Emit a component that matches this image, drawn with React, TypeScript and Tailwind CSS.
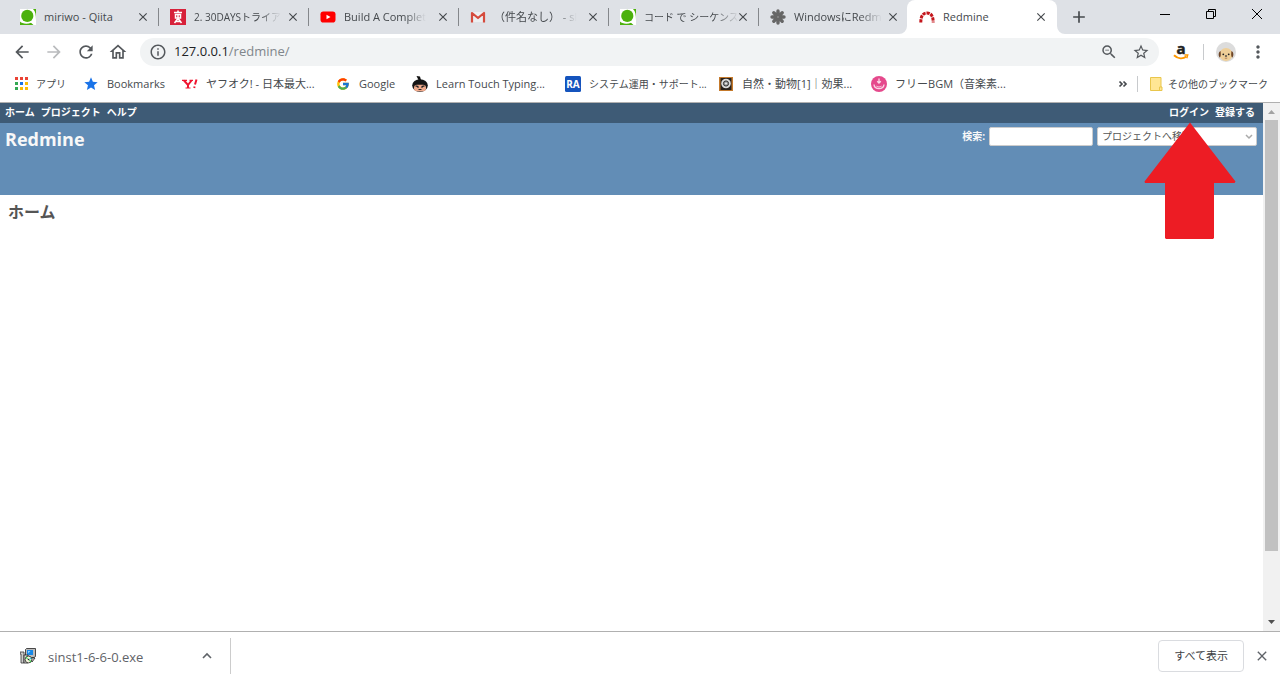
import type { ReactNode } from 'react';
import { FcGoogle } from 'react-icons/fc';
import {
  MdAdd,
  MdArrowBack,
  MdArrowForward,
  MdClose,
  MdInfoOutline,
  MdMoreVert,
  MdOutlineHome,
  MdRefresh,
  MdStar,
  MdStarBorder,
  MdZoomOut,
} from 'react-icons/md';

function QiitaIcon() {
  return (
    <svg className="w-4 h-4 shrink-0" viewBox="0 0 16 16">
      <rect width="16" height="16" fill="#fff" />
      <path d="M13 0h3v11C16 6 15.500 2.500 13 0z" fill="#4cb10d" />
      <circle cx="7.300" cy="6.900" r="6.100" fill="#4cb10d" />
      <path d="M0 12.500c2 2.200 7 3 11 1.200l2.500 2.300H0z" fill="#4cb10d" />
      <path d="M11.500 12.500l4.500 3" stroke="#fff" strokeWidth="1.500" />
    </svg>
  );
}

function TrialIcon() {
  return (
    <svg className="w-4 h-4 shrink-0" viewBox="0 0 16 16">
      <rect width="16" height="16" fill="#d7213a" />
      <path d="M4 3.500h8M8 1.500v2" stroke="#fff" strokeWidth="1.600" />
      <path d="M5.500 5.500h5v3.500h-5z" fill="none" stroke="#fff" strokeWidth="1.500" />
      <path d="M8 5v6M7.500 10L4.500 14M8.500 10l3 4M5.500 12.500h5" fill="none" stroke="#fff" strokeWidth="1.500" />
    </svg>
  );
}

function YoutubeIcon() {
  return (
    <svg className="w-4 h-4 shrink-0" viewBox="0 0 16 16">
      <rect x="0.500" y="2.500" width="15" height="11" rx="2.800" fill="#f00" />
      <path d="M6.500 5.700v4.600l4-2.300z" fill="#fff" />
    </svg>
  );
}

function GmailIcon() {
  return (
    <svg className="w-4 h-4 shrink-0" viewBox="0 0 16 16">
      <path d="M1 3h14v10H1z" fill="#eceff1" />
      <path d="M2 13.500V4l6 5 6-5v9.500" fill="none" stroke="#d54b3d" strokeWidth="2.200" strokeLinejoin="round" />
    </svg>
  );
}

function FlowerIcon() {
  return (
    <svg className="w-4 h-4 shrink-0" viewBox="0 0 16 16" stroke="#666" strokeWidth="3.400" strokeLinecap="round">
      <path d="M8 2v12M2 8h12M3.800 3.800l8.400 8.400M12.200 3.800l-8.400 8.400" />
      <circle cx="8" cy="8" r="1" fill="#888" stroke="none" />
    </svg>
  );
}

function RedmineIcon() {
  return (
    <svg className="w-4 h-4 shrink-0" viewBox="0 0 16 16">
      <path d="M1.800 13.500C1.800 7 4 4 8 4s6.200 3 6.200 9.500" fill="none" stroke="#c4161c" strokeWidth="3" strokeDasharray="3.200 0.900" />
    </svg>
  );
}

function AppsIcon() {
  const colors = ['#ea4335', '#ea4335', '#ea4335', '#34a853', '#1a73e8', '#fbbc05', '#34a853', '#fbbc05', '#fbbc05'];
  return (
    <svg className="w-4 h-4 shrink-0" viewBox="0 0 16 16">
      {colors.map((color, i) => (
        <rect key={i} x={3 + (i % 3) * 5} y={1 + Math.floor(i / 3) * 5} width="3" height="3" fill={color} />
      ))}
    </svg>
  );
}

function YahooIcon() {
  return (
    <svg className="w-4 h-4 shrink-0" viewBox="0 0 16 16" fill="none" stroke="#f0142f">
      <path d="M2 4.500l4 4.500 3.500-4.500M6 8.500V12" strokeWidth="2" />
      <path d="M0 4.300h5M7.500 4.300H11M3.500 12h5" strokeWidth="1.200" />
      <path d="M14.500 3.500l-1.500 5M12.600 10.500l-.4 1.500" strokeWidth="2" />
    </svg>
  );
}

function NinjaIcon() {
  return (
    <svg className="w-4 h-4 shrink-0" viewBox="0 0 16 16">
      <path d="M4.500 0l3.500.5L9 4H6.500z" fill="#111" />
      <ellipse cx="8" cy="9.500" rx="7.800" ry="6.300" fill="#151515" />
      <rect x="2" y="8.800" width="12" height="6.400" rx="3" fill="#efa98b" />
      <path d="M3.500 9.800l3 .8M12.500 9.800l-3 .8" stroke="#222" strokeWidth="1.300" />
      <path d="M5.500 11.500h1M9.500 11.500h1M6.500 13.500h3" stroke="#222" />
    </svg>
  );
}

function RaIcon() {
  return (
    <svg className="w-4 h-4 shrink-0" viewBox="0 0 16 16">
      <rect width="16" height="16" rx="1.500" fill="#1554bd" />
      <text x="8" y="11.500" textAnchor="middle" fill="#fff" className="text-[10px] font-bold">RA</text>
    </svg>
  );
}

function SoundIcon() {
  return (
    <svg className="w-4 h-4 shrink-0" viewBox="0 0 16 16">
      <rect x="1" y="1" width="14" height="14" fill="#c57a2c" />
      <rect x="2.500" y="2" width="11" height="12" fill="#28211b" />
      <circle cx="8" cy="7.500" r="4.800" fill="#ddd" />
      <circle cx="8" cy="7.500" r="2.600" fill="#999" stroke="#333" />
      <circle cx="8" cy="7.500" r="1" fill="#eee" />
    </svg>
  );
}

function BgmIcon() {
  return (
    <svg className="w-4 h-4 shrink-0" viewBox="0 0 16 16">
      <circle cx="8" cy="8" r="8" fill="#e5498c" />
      <path d="M8 2.500v4.500M6.200 5.300L8 7.100l1.800-1.800" fill="none" stroke="#fbdbe8" strokeWidth="1.300" />
      <path d="M3 8.500c.5 5.500 9.500 5.500 10 0" fill="none" stroke="#f9d3e3" strokeWidth="1.400" />
      <path d="M5 9.500c1.500 1.200 4.500 1.200 6 0-.5 2.500-5.500 2.500-6 0z" fill="#f9d3e3" />
    </svg>
  );
}

function FolderIcon() {
  return (
    <svg className="w-4 h-4 shrink-0" viewBox="0 0 16 16">
      <path d="M2.500 1.500h10.500v9.500h1v3.500H2.500z" fill="#ffe694" stroke="#e9c64c" />
      <path d="M11.500 14v-3h2" fill="none" stroke="#e9c64c" />
    </svg>
  );
}

function AmazonIcon() {
  return (
    <svg className="w-4 h-4 overflow-visible" viewBox="0 0 16 16">
      <text x="8" y="10" textAnchor="middle" fill="#222" stroke="#222" strokeWidth="0.500" className="text-[15px] font-bold">a</text>
      <path d="M1 11.200c4 3.800 9 3.800 12.500 1.300" fill="none" stroke="#f90" strokeWidth="2" />
      <path d="M11.500 11h3.300l-1 3.200" fill="none" stroke="#f90" strokeWidth="1.300" />
    </svg>
  );
}

function DogAvatar() {
  return (
    <svg className="w-5 h-5" viewBox="0 0 20 20">
      <circle cx="10" cy="10" r="10" fill="#dcdcdc" />
      <ellipse cx="10" cy="12.500" rx="6.600" ry="6.500" fill="#efcf98" />
      <path d="M4.500 9C2.500 10 2 13 3.500 15.500 5 15 5 12 4.500 9zM15.500 9c2 1 2.500 4 1 6.500-1.500-.5-1.500-3.500-1-6.500z" fill="#6e4526" />
      <circle cx="7.300" cy="12.300" r="0.900" fill="#222" />
      <circle cx="12.700" cy="12.300" r="0.900" fill="#222" />
      <ellipse cx="10" cy="14" rx="1.200" ry="0.800" fill="#333" />
      <path d="M8.800 16.200h2.400" stroke="#a06a48" strokeWidth="0.800" />
    </svg>
  );
}

function InstallerIcon() {
  return (
    <svg className="w-4 h-4 shrink-0" viewBox="0 0 16 16">
      <path d="M0 4h4v11H1V6H0z" fill="#ccc" stroke="#333" strokeWidth="0.800" />
      <path d="M5.500 1.500l1-1h9v8l-1.500 1H5.500z" fill="#bbb" stroke="#222" strokeWidth="0.800" />
      <rect x="7" y="2" width="6" height="5" fill="#1688e8" />
      <path d="M8 3h2.500L8 5.500z" fill="#8fd0ff" />
      <path d="M4 7h4v8H4zM11 10h4l-3 4z" fill="#ddd" stroke="#222" strokeWidth="0.800" />
      <circle cx="8.500" cy="11.500" r="3.400" fill="#f4f4dc" stroke="#222" strokeWidth="0.800" />
      <path d="M8.500 11.500l-3-1.500 1-1.500zM8.500 11.500l3 1.500-1 1.500z" fill="#38c84c" />
      <path d="M8.500 11.500l2.500-2 .5 1.500z" fill="#22c7e4" />
      <circle cx="8.500" cy="11.500" r="0.800" fill="#222" />
    </svg>
  );
}

const tabs: { icon: ReactNode; title: string; style: string }[] = [
  { icon: <QiitaIcon />, title: 'miriwo - Qiita', style: 'text-[11px]' },
  { icon: <TrialIcon />, title: '2. 30DAYSトライア', style: 'text-[10px] mask-r-from-75%' },
  { icon: <YoutubeIcon />, title: 'Build A Complet', style: 'text-[11px] mask-r-from-75%' },
  { icon: <GmailIcon />, title: '（件名なし） - sl', style: 'text-[11px] mask-r-from-75%' },
  { icon: <QiitaIcon />, title: 'コード で シーケンス', style: 'text-[10px] mask-r-from-75%' },
  { icon: <FlowerIcon />, title: 'WindowsにRedm', style: 'text-[11px] mask-r-from-75%' },
];

const bookmarks: { icon: ReactNode; title: string; size: string }[] = [
  { icon: <AppsIcon />, title: 'アプリ', size: 'text-[10px]' },
  { icon: <MdStar className="w-4 h-4 shrink-0 text-[#1a73e8]" />, title: 'Bookmarks', size: 'text-[11px]' },
  { icon: <YahooIcon />, title: 'ヤフオク! - 日本最大...', size: 'text-[11px] w-[112px]' },
  { icon: <FcGoogle className="w-4 h-4 shrink-0 p-px" />, title: 'Google', size: 'text-[11px]' },
  { icon: <NinjaIcon />, title: 'Learn Touch Typing...', size: 'text-[11px] w-[112px]' },
  { icon: <RaIcon />, title: 'システム運用・サポート...', size: 'text-[10px] w-[112px]' },
  { icon: <SoundIcon />, title: '自然・動物[1]｜効果...', size: 'text-[11px] w-[112px]' },
  { icon: <BgmIcon />, title: 'フリーBGM（音楽素...', size: 'text-[11px] w-[112px]' },
];

function TabStrip() {
  return (
    <div className="flex h-[34px] bg-[#dee1e6] pl-2 text-[11px] text-[#45494d]">
      {tabs.map((tab, i) => (
        <div key={i} className="flex w-[150px] items-center py-2">
          <button className={`flex h-[18px] min-w-0 flex-1 items-center gap-2 pl-[11px] text-left ${i > 0 ? 'border-l border-[#84878b]' : 'border-l border-transparent'}`}>
            {tab.icon}
            <span className={`whitespace-nowrap pt-px ${tab.style}`}>{tab.title}</span>
          </button>
          <button aria-label="タブを閉じる" className="flex h-[18px] w-[30px] items-center justify-center">
            <MdClose className="h-3.5 w-3.5" stroke="currentColor" />
          </button>
        </div>
      ))}
      <div className="relative -ml-px flex w-[150px] items-center rounded-t-lg bg-white">
        <svg className="absolute bottom-0 -left-2 h-2 w-2" viewBox="0 0 8 8"><path d="M8 0v8H0a8 8 0 0 0 8-8z" fill="#fff" /></svg>
        <svg className="absolute -right-2 bottom-0 h-2 w-2" viewBox="0 0 8 8"><path d="M0 0v8h8a8 8 0 0 1-8-8z" fill="#fff" /></svg>
        <button className="flex flex-1 items-center gap-2 pl-3 text-left">
          <RedmineIcon />
          <span className="pt-px">Redmine</span>
        </button>
        <button aria-label="タブを閉じる" className="flex w-8 items-center justify-center">
          <MdClose className="h-3.5 w-3.5" stroke="currentColor" />
        </button>
      </div>
      <button aria-label="新しいタブ" className="px-3">
        <MdAdd className="h-5 w-5" stroke="currentColor" />
      </button>
      <div className="ml-auto flex h-7 text-black">
        <button aria-label="最小化" className="flex w-[46px] items-center justify-center">
          <svg className="h-3 w-3" viewBox="0 0 12 12"><path d="M1 6.500h10" stroke="currentColor" /></svg>
        </button>
        <button aria-label="元に戻す" className="flex w-[46px] items-center justify-center">
          <svg className="h-3 w-3" viewBox="0 0 12 12" fill="none" stroke="currentColor"><path d="M1.500 3.500h7v7h-7zM3.500 3.500v-2h7v7h-2" /></svg>
        </button>
        <button aria-label="閉じる" className="flex w-[46px] items-center justify-center">
          <svg className="h-3 w-3" viewBox="0 0 12 12"><path d="M1 1l10 10M11 1L1 11" stroke="currentColor" /></svg>
        </button>
      </div>
    </div>
  );
}

function Toolbar() {
  return (
    <div className="flex h-9 items-center px-3 text-[#54585c]">
      <div className="flex gap-3">
        <button aria-label="戻る"><MdArrowBack className="h-5 w-5" /></button>
        <button aria-label="進む" className="text-[#b9bbbd]"><MdArrowForward className="h-5 w-5" /></button>
        <button aria-label="再読み込み"><MdRefresh className="h-5 w-5" /></button>
        <button aria-label="ホームページ"><MdOutlineHome className="h-5 w-5" /></button>
      </div>
      <div className="ml-3 flex h-7 flex-1 items-center rounded-full bg-[#f1f3f4] px-[9px]">
        <MdInfoOutline className="mr-[7px] h-[18px] w-[18px]" />
        <a href="#" className="flex-1 text-[13px] text-[#80868b]"><span className="text-[#202124]">127.0.0.1</span>/redmine/</a>
        <button aria-label="ズーム" className="mr-3.5"><MdZoomOut className="h-[18px] w-[18px]" /></button>
        <button aria-label="ブックマークに追加"><MdStarBorder className="h-[18px] w-[18px]" /></button>
      </div>
      <button aria-label="Amazon" className="mx-3.5"><AmazonIcon /></button>
      <div className="mr-3 h-4 border-l border-[#c8cacd]" />
      <button aria-label="プロフィール"><DogAvatar /></button>
      <button aria-label="メニュー" className="ml-3"><MdMoreVert className="h-5 w-5" /></button>
    </div>
  );
}

function BookmarkBar() {
  return (
    <div className="flex h-[33px] items-center border-b border-[#b0b0b0] pr-3 pb-1 pl-3 text-[#45494d]">
      <div className="flex flex-1 gap-[17px]">
        {bookmarks.map((b) => (
          <a key={b.title} href="#" className="flex items-center gap-2 whitespace-nowrap">
            {b.icon}
            <span className={b.size}>{b.title}</span>
          </a>
        ))}
      </div>
      <button aria-label="他のブックマーク" className="mr-2">
        <svg className="h-3 w-3" viewBox="0 0 12 12" fill="none" stroke="currentColor" strokeWidth="1.700"><path d="M2.500 3.500L5 6 2.500 8.500M6.500 3.500L9 6 6.500 8.500" /></svg>
      </button>
      <div className="mr-2.5 h-4 border-l border-[#c8cacd]" />
      <a href="#" className="flex items-center gap-1 text-[10px]">
        <FolderIcon />
        その他のブックマーク
      </a>
    </div>
  );
}

function RedminePage() {
  return (
    <main className="relative flex-1">
      <nav className="flex h-5 items-center justify-between bg-[#3e5b76] pr-2 pb-0.5 pl-[5px] text-[10px] font-bold text-white">
        <div className="flex gap-1.5">
          <a href="#">ホーム</a>
          <a href="#">プロジェクト</a>
          <a href="#">ヘルプ</a>
        </div>
        <div className="flex gap-1.5">
          <a href="#">ログイン</a>
          <a href="#">登録する</a>
        </div>
      </nav>
      <header className="flex h-[72px] items-start justify-between bg-[#628db6] pt-1 pr-1.5 pl-[5px] text-[#f8f8f8]">
        <h1 className="text-lg leading-6 font-bold">Redmine</h1>
        <div className="flex items-center gap-1 text-[10px]">
          <label htmlFor="q" className="font-bold">検索:</label>
          <input id="q" type="text" className="h-[19px] w-[104px] rounded-xs border border-[#ccc] bg-white px-1 text-[#333]" />
          <div className="relative">
            <select aria-label="プロジェクト" className="h-[19px] w-40 appearance-none rounded-xs border border-[#ccc] bg-white px-1 text-[#555]">
              <option>プロジェクトへ移動...</option>
            </select>
            <svg className="pointer-events-none absolute top-1.5 right-1 h-2 w-2" viewBox="0 0 8 8"><path d="M1 2l3 3 3-3" fill="none" stroke="#aaa" strokeWidth="1.500" /></svg>
          </div>
        </div>
      </header>
      <h2 className="px-2 pt-[5px] text-base leading-6 font-bold text-[#555]">ホーム</h2>
      <svg className="absolute top-[19px] right-[27px] h-[117px] w-[92px]" viewBox="0 0 92 117">
        <path d="M46 0.500l45.500 59-1 1.500H70v55l-1 1H22l-1-1V61H1l-.5-1.500z" fill="#ed1c24" />
      </svg>
    </main>
  );
}

function Scrollbar() {
  return (
    <div className="flex w-[17px] flex-col items-center bg-[#f1f1f1]">
      <svg className="h-[17px] w-[17px]" viewBox="0 0 17 17"><path d="M5 11l3.500-4 3.500 4z" fill="#a3a3a3" /></svg>
      <div className="w-[13px] flex-[431] bg-[#c1c1c1]" />
      <div className="flex-[63]" />
      <svg className="h-[17px] w-[17px]" viewBox="0 0 17 17"><path d="M5 6l3.500 4L12 6z" fill="#505050" /></svg>
    </div>
  );
}

function DownloadShelf() {
  return (
    <footer className="flex h-[49px] items-center border-t border-[#b0b0b0] text-[#5f6368]">
      <div className="flex h-9 w-[231px] items-center border-r border-[#ccc] pr-[15px] pl-5">
        <button className="flex flex-1 items-center gap-3 text-[13px]">
          <InstallerIcon />
          <span className="pt-1">sinst1-6-6-0.exe</span>
        </button>
        <button aria-label="メニューを開く">
          <svg className="h-4 w-4" viewBox="0 0 16 16"><path d="M4 10l4-4 4 4" fill="none" stroke="currentColor" strokeWidth="1.600" /></svg>
        </button>
      </div>
      <button className="ml-auto h-8 rounded border border-[#dadce0] px-[15px] text-[11px] text-[#3c4043]">すべて表示</button>
      <button aria-label="閉じる" className="px-2.5"><MdClose className="h-4 w-4" stroke="currentColor" /></button>
    </footer>
  );
}

export default function App() {
  return (
    <div className="flex min-h-screen flex-col bg-white font-['Open_Sans','Noto_Sans_CJK_JP',sans-serif]">
      <TabStrip />
      <Toolbar />
      <BookmarkBar />
      <div className="flex flex-1">
        <RedminePage />
        <Scrollbar />
      </div>
      <DownloadShelf />
    </div>
  );
}
